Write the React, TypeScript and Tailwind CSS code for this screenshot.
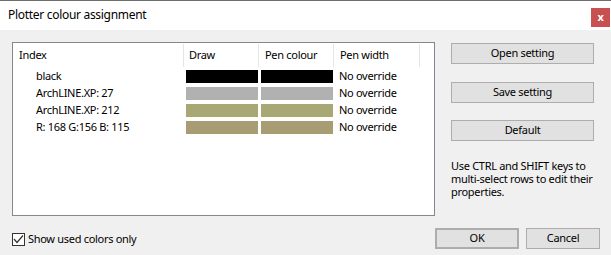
const rows = [
  { name: 'black', color: '#000000' },
  { name: 'ArchLINE.XP: 27', color: '#b1b1b1' },
  { name: 'ArchLINE.XP: 212', color: '#a8a874' },
  { name: 'R: 168 G:156 B: 115', color: '#a89c73' },
];

const cols = 'grid grid-cols-[171px_75px_75px_86px]';

function HeaderCell({ label, pad }: { label: string; pad: string }) {
  return (
    <div className="h-[25px] pt-px">
      <div className={`h-[23px] border-r border-[#e5e5e5] flex items-center ${pad}`}>{label}</div>
    </div>
  );
}

function Button({ label, className = '' }: { label: string; className?: string }) {
  return (
    <button className={`h-[21px] bg-[#e1e1e1] border border-[#adadad] text-black flex items-center justify-center ${className}`}>
      {label}
    </button>
  );
}

export default function App() {
  return (
    <div className="w-[611px] h-[255px] bg-[#f0f0f0] text-[11px] tracking-[-0.3px] text-black font-['Noto_Sans',sans-serif] overflow-hidden">
      {/* Title bar */}
      <div className="h-[30px] bg-white border-t border-[#6e6e6e] flex items-center justify-between pl-2 pr-px">
        <span className="text-[12px] -mt-px">Plotter colour assignment</span>
        <div className="w-[19px] h-[19px] bg-[#c75050] text-white text-[11px] font-bold flex items-center justify-center mt-[4px]">
          x
        </div>
      </div>

      <div className="pl-3 pr-[17px] pt-3">
        <div className="flex">
          {/* List view */}
          <div className="w-[423px] h-[174px] bg-white border border-[#828790]">
            <div className={cols}>
              <HeaderCell label="Index" pad="pl-[6px]" />
              <HeaderCell label="Draw" pad="pl-[5px]" />
              <HeaderCell label="Pen colour" pad="pl-[6px]" />
              <HeaderCell label="Pen width" pad="pl-[6px]" />
            </div>
            {rows.map((r) => (
              <div key={r.name} className={`${cols} h-[17px]`}>
                <div className="pl-[23px] flex items-center">{r.name}</div>
                <div className="pl-[2px] pt-[2px]">
                  <div className="w-[72px] h-[13px]" style={{ backgroundColor: r.color }} />
                </div>
                <div className="pl-[2px] pt-[2px]">
                  <div className="w-[72px] h-[13px]" style={{ backgroundColor: r.color }} />
                </div>
                <div className="pl-[5px] flex items-center">No override</div>
              </div>
            ))}
          </div>

          {/* Right column */}
          <div className="ml-4 w-[143px] flex flex-col">
            <Button label="Open setting" className="mt-px" />
            <Button label="Save setting" className="mt-[18px]" />
            <Button label="Default" className="mt-[17px]" />
            <p className="mt-[18px] leading-[13px]">
              Use CTRL and SHIFT keys to multi-select rows to edit their properties.
            </p>
          </div>
        </div>

        {/* Bottom row */}
        <div className="mt-3 flex items-center pr-0">
          <label className="flex items-center gap-[3px] mt-[1px]">
            <span className="w-[13px] h-[13px] border border-[#333333] bg-white flex items-center justify-center">
              <svg width="11" height="11" viewBox="0 0 11 11">
                <path d="M1 5 L4 8.5 L10 1.5" fill="none" stroke="#333333" strokeWidth="1.2" />
              </svg>
            </span>
            Show used colors only
          </label>
          <div className="ml-auto flex gap-[7px] -mr-[6px]">
            <Button label="OK" className="w-[84px] border-2 border-[#0078d7]" />
            <Button label="Cancel" className="w-[74px]" />
          </div>
        </div>
      </div>
    </div>
  );
}
